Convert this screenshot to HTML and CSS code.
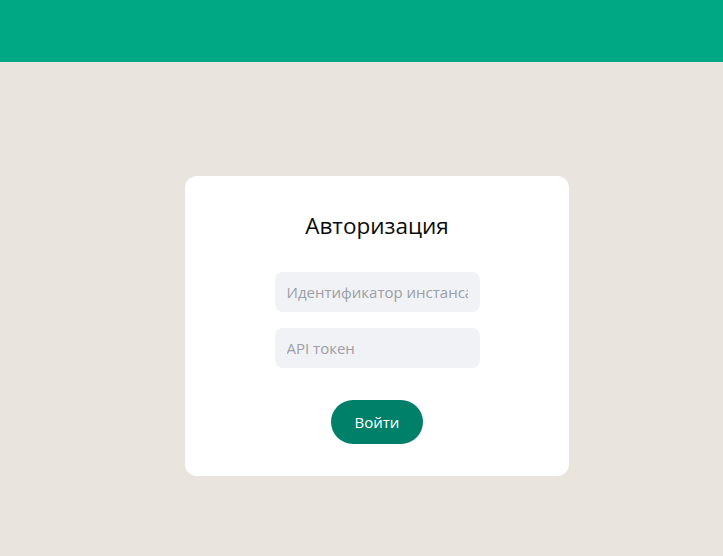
FILE: index.html
```html
<!DOCTYPE html>
<html lang="ru">
<head>
<meta charset="utf-8">
<link rel="stylesheet" href="styles.css">
</head>
<body>
<header class="topbar"></header>
<main class="main">
  <form class="card">
    <h1 class="title">Авторизация</h1>
    <div class="fields">
      <input class="field" type="text" placeholder="Идентификатор инстанса">
      <input class="field" type="text" placeholder="API токен">
    </div>
    <button class="btn" type="button">Войти</button>
  </form>
</main>
</body>
</html>
```
FILE: styles.css
```css
html, body {
  margin: 0;
  padding: 0;
  height: 100%;
}
body {
  background: #e9e4de;
  font-family: "Open Sans", "Noto Sans", sans-serif;
}
.topbar {
  height: 62px;
  background: #00a884;
}
.main {
  display: flex;
  justify-content: center;
  padding: 114px 0 0 31px;
}
.card {
  width: 384px;
  height: 300px;
  box-sizing: border-box;
  background: #fff;
  border-radius: 12px;
  display: flex;
  flex-direction: column;
  align-items: center;
  padding-top: 34px;
}
.title {
  margin: 0;
  font-weight: 400;
  font-size: 22.5px;
  line-height: 32px;
  color: #0b0b0b;
}
.fields {
  display: flex;
  flex-direction: column;
  gap: 16px;
  margin-top: 30px;
}
.field {
  width: 205px;
  height: 40px;
  box-sizing: border-box;
  border: none;
  outline: none;
  border-radius: 8px;
  background: #f0f2f5;
  padding: 0 12px;
  font-family: inherit;
  font-size: 15px;
  color: #111;
}
.field::placeholder {
  color: #9d9ea6;
}
.btn {
  margin-top: 32px;
  width: 92px;
  height: 44px;
  border: none;
  border-radius: 22px;
  background: #008069;
  color: #fff;
  font-family: inherit;
  font-size: 15px;
  cursor: pointer;
}
```
